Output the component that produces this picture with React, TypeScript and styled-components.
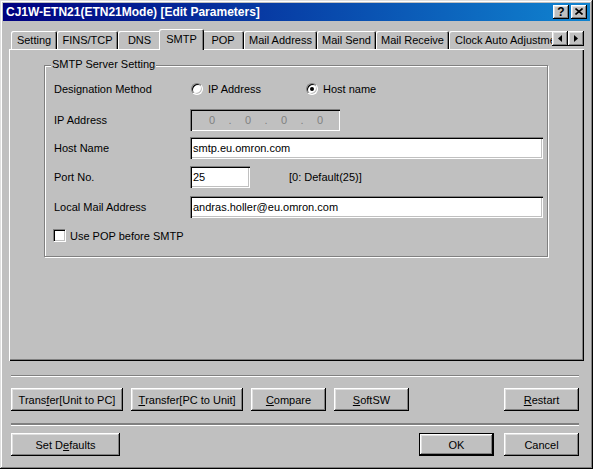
import React from "react";
import styled, { createGlobalStyle } from "styled-components";

const Global = createGlobalStyle`
  html, body { margin: 0; padding: 0; background: #c0c0c0; }
  body { font-family: "Liberation Sans", Arial, sans-serif; font-size: 11px; color: #000; }
  * { box-sizing: border-box; }
`;

const raised = `
  box-shadow: inset -1px -1px #000, inset 1px 1px #fff, inset -2px -2px #808080, inset 2px 2px #dfdfdf;
`;

const Window = styled.div`
  width: 593px;
  height: 469px;
  background: #c0c0c0;
  padding: 3px;
  display: flex;
  flex-direction: column;
  box-shadow: inset -1px -1px #000, inset 1px 1px #dfdfdf, inset -2px -2px #808080, inset 2px 2px #fff;
`;

const TitleBar = styled.div`
  height: 18px;
  flex: none;
  display: flex;
  align-items: center;
  padding: 0 3px 0 3px;
  background: linear-gradient(to right, #000080, #1084d0);
  color: #fff;
  font-weight: bold;
  font-size: 12px;
`;

const TitleText = styled.div`
  flex: 1;
  white-space: nowrap;
  overflow: hidden;
`;

const CaptionButton = styled.div<{ $gap?: number }>`
  width: 16px;
  height: 14px;
  margin-left: ${(p) => p.$gap ?? 0}px;
  background: #c0c0c0;
  ${raised}
  display: flex;
  align-items: center;
  justify-content: center;
  color: #000;
  font-size: 12px;
  font-weight: bold;
  line-height: 14px;
  padding-bottom: 1px;
`;

const Client = styled.div`
  flex: 1;
  display: flex;
  flex-direction: column;
  padding: 8px 6px 0 6px;
`;

const TabStrip = styled.div`
  display: flex;
  height: 21px;
  position: relative;
  z-index: 2;
`;

const Tabs = styled.div`
  flex: 1;
  display: flex;
  align-items: flex-end;
  overflow: hidden;
  padding-left: 2px;
  height: 21px;
`;

const Tab = styled.div<{ $w: number; $active?: boolean }>`
  flex: none;
  width: ${(p) => p.$w}px;
  height: ${(p) => (p.$active ? 21 : 18)}px;
  margin: ${(p) => (p.$active ? "0 -2px 0 -2px" : "0 0 1px 0")};
  padding-bottom: ${(p) => (p.$active ? 2 : 0)}px;
  position: relative;
  z-index: ${(p) => (p.$active ? 1 : 0)};
  background: #c0c0c0;
  border-radius: 2px 2px 0 0;
  box-shadow: inset 1px 1px #fff, inset -1px 0 #000, inset -2px 0 #808080;
  display: flex;
  align-items: center;
  justify-content: ${(p) => (p.$w > 100 ? "flex-start" : "center")};
  padding-left: ${(p) => (p.$w > 100 ? 6 : 0)}px;
  white-space: nowrap;
`;

const ScrollButtons = styled.div`
  flex: none;
  display: flex;
  margin-top: 2px;
  height: 15px;
`;

const ScrollBtn = styled.div`
  width: 16px;
  height: 15px;
  background: #c0c0c0;
  ${raised}
  display: flex;
  align-items: center;
  justify-content: center;
`;

const Panel = styled.div`
  flex: none;
  height: 312px;
  margin-top: -1px;
  position: relative;
  z-index: 1;
  background: #c0c0c0;
  box-shadow: inset 1px 1px #fff, inset -1px -1px #000, inset -2px -2px #808080;
  padding: 16px 36px 0 35px;
`;

const Group = styled.div`
  position: relative;
  height: 192px;
  border: 1px solid #808080;
  box-shadow: inset 1px 1px #fff, 1px 1px #fff;
  padding: 14px 0 0 9px;
`;

const Legend = styled.span`
  position: absolute;
  top: -8px;
  left: 6px;
  padding: 0 1px;
  background: #c0c0c0;
  line-height: 13px;
  white-space: nowrap;
`;

const Row = styled.div<{ $h: number; $mt?: number }>`
  display: flex;
  align-items: center;
  height: ${(p) => p.$h}px;
  margin-top: ${(p) => p.$mt ?? 0}px;
  white-space: nowrap;
`;

const Label = styled.div`
  flex: none;
  width: 136px;
`;

const RadioOption = styled.div<{ $w?: number }>`
  flex: none;
  display: flex;
  align-items: center;
  gap: 5px;
  width: ${(p) => (p.$w ? `${p.$w}px` : "auto")};
  margin-left: 1px;
`;

const RadioCircle = styled.span<{ $checked?: boolean }>`
  flex: none;
  position: relative;
  width: 12px;
  height: 12px;
  border-radius: 50%;
  background: #fff;
  border: 1px solid;
  border-color: #808080 #fff #fff #808080;
  box-shadow: inset 1px 1px #000, inset -1px -1px #c0c0c0;
  &::after {
    content: "";
    display: ${(p) => (p.$checked ? "block" : "none")};
    position: absolute;
    left: 3px;
    top: 3px;
    width: 4px;
    height: 4px;
    border-radius: 50%;
    background: #000;
  }
`;

const Field = styled.div<{ $w: number; $disabled?: boolean }>`
  flex: none;
  width: ${(p) => p.$w}px;
  height: 22px;
  background: ${(p) => (p.$disabled ? "#c0c0c0" : "#fff")};
  box-shadow: inset 1px 1px #808080, inset 2px 2px #000, inset -1px -1px #fff, inset -2px -2px #c0c0c0;
  padding: 0 4px 0 3px;
  display: flex;
  align-items: center;
  white-space: nowrap;
  overflow: hidden;
`;

const IpFieldBox = styled(Field)`
  padding-left: 12px;
  color: #808080;
`;

const IpSeg = styled.span`
  width: 20px;
  text-align: center;
`;

const IpDot = styled.span`
  width: 16px;
  text-align: center;
`;

const Hint = styled.span`
  margin-left: 39px;
`;

const CheckBox = styled.span`
  flex: none;
  width: 13px;
  height: 13px;
  margin-left: -1px;
  margin-right: 4px;
  background: #fff;
  border: 1px solid;
  border-color: #808080 #fff #fff #808080;
  box-shadow: inset 1px 1px #000, inset -1px -1px #c0c0c0;
`;

const Bottom = styled.div`
  display: flex;
  flex-direction: column;
  padding: 0 5px 0 2px;
`;

const Separator = styled.div<{ $mt: number; $thick?: boolean }>`
  margin-top: ${(p) => p.$mt}px;
  height: ${(p) => (p.$thick ? 3 : 2)}px;
  border-top: ${(p) => (p.$thick ? 2 : 1)}px solid #808080;
  border-bottom: 1px solid #fff;
`;

const ButtonRow = styled.div<{ $mt: number; $gap?: number }>`
  display: flex;
  gap: ${(p) => p.$gap ?? 8}px;
  margin-top: ${(p) => p.$mt}px;
`;

const Spacer = styled.div`
  flex: 1;
`;

const Button = styled.div<{ $w: number; $default?: boolean }>`
  flex: none;
  width: ${(p) => p.$w}px;
  height: 23px;
  background: #c0c0c0;
  border: ${(p) => (p.$default ? "1px solid #000" : "none")};
  ${raised}
  display: flex;
  align-items: center;
  justify-content: center;
  white-space: nowrap;
  u { text-decoration: underline; text-underline-offset: 1px; }
`;

const tabs: { label: string; w: number; active?: boolean }[] = [
  { label: "Setting", w: 46 },
  { label: "FINS/TCP", w: 61 },
  { label: "DNS", w: 43 },
  { label: "SMTP", w: 45, active: true },
  { label: "POP", w: 42 },
  { label: "Mail Address", w: 73 },
  { label: "Mail Send", w: 59 },
  { label: "Mail Receive", w: 73 },
  { label: "Clock Auto Adjustment", w: 120 },
];

export default function App() {
  return (
    <>
      <Global />
      <Window>
        <TitleBar>
          <TitleText>CJ1W-ETN21(ETN21Mode) [Edit Parameters]</TitleText>
          <CaptionButton>?</CaptionButton>
          <CaptionButton $gap={2}>
            <svg width="8" height="7" viewBox="0 0 8 7">
              <path d="M0.5 0.5 L7.5 6.5 M7.5 0.5 L0.5 6.5" stroke="#000" strokeWidth="1.6" fill="none" />
            </svg>
          </CaptionButton>
        </TitleBar>
        <Client>
          <TabStrip>
            <Tabs>
              {tabs.map((t) => (
                <Tab key={t.label} $w={t.w} $active={t.active}>
                  {t.label}
                </Tab>
              ))}
            </Tabs>
            <ScrollButtons>
              <ScrollBtn>
                <svg width="4" height="7" viewBox="0 0 4 7">
                  <polygon points="4,0 4,7 0,3.5" fill="#000" />
                </svg>
              </ScrollBtn>
              <ScrollBtn>
                <svg width="4" height="7" viewBox="0 0 4 7">
                  <polygon points="0,0 0,7 4,3.5" fill="#000" />
                </svg>
              </ScrollBtn>
            </ScrollButtons>
          </TabStrip>
          <Panel>
            <Group>
              <Legend>SMTP Server Setting</Legend>
              <Row $h={18}>
                <Label>Designation Method</Label>
                <RadioOption $w={114}>
                  <RadioCircle />
                  IP Address
                </RadioOption>
                <RadioOption>
                  <RadioCircle $checked />
                  Host name
                </RadioOption>
              </Row>
              <Row $h={22} $mt={11}>
                <Label>IP Address</Label>
                <IpFieldBox $w={150} $disabled>
                  <IpSeg>0</IpSeg>
                  <IpDot>.</IpDot>
                  <IpSeg>0</IpSeg>
                  <IpDot>.</IpDot>
                  <IpSeg>0</IpSeg>
                  <IpDot>.</IpDot>
                  <IpSeg>0</IpSeg>
                </IpFieldBox>
              </Row>
              <Row $h={22} $mt={6}>
                <Label>Host Name</Label>
                <Field $w={353}>smtp.eu.omron.com</Field>
              </Row>
              <Row $h={22} $mt={7}>
                <Label>Port No.</Label>
                <Field $w={60}>25</Field>
                <Hint>[0: Default(25)]</Hint>
              </Row>
              <Row $h={22} $mt={8}>
                <Label>Local Mail Address</Label>
                <Field $w={353}>andras.holler@eu.omron.com</Field>
              </Row>
              <Row $h={13} $mt={11}>
                <CheckBox />
                Use POP before SMTP
              </Row>
            </Group>
          </Panel>
          <Bottom>
            <Separator $mt={14} />
            <ButtonRow $mt={11}>
              <Button $w={112}>
                Trans<u>f</u>er[Unit to PC]
              </Button>
              <Button $w={112}>
                <u>T</u>ransfer[PC to Unit]
              </Button>
              <Button $w={75}>
                <u>C</u>ompare
              </Button>
              <Button $w={75}>
                <u>S</u>oftSW
              </Button>
              <Spacer />
              <Button $w={75}>
                <u>R</u>estart
              </Button>
            </ButtonRow>
            <Separator $mt={12} $thick />
            <ButtonRow $mt={7} $gap={10}>
              <Button $w={109}>
                Set D<u>e</u>faults
              </Button>
              <Spacer />
              <Button $w={75} $default>
                OK
              </Button>
              <Button $w={75}>Cancel</Button>
            </ButtonRow>
          </Bottom>
        </Client>
      </Window>
    </>
  );
}
